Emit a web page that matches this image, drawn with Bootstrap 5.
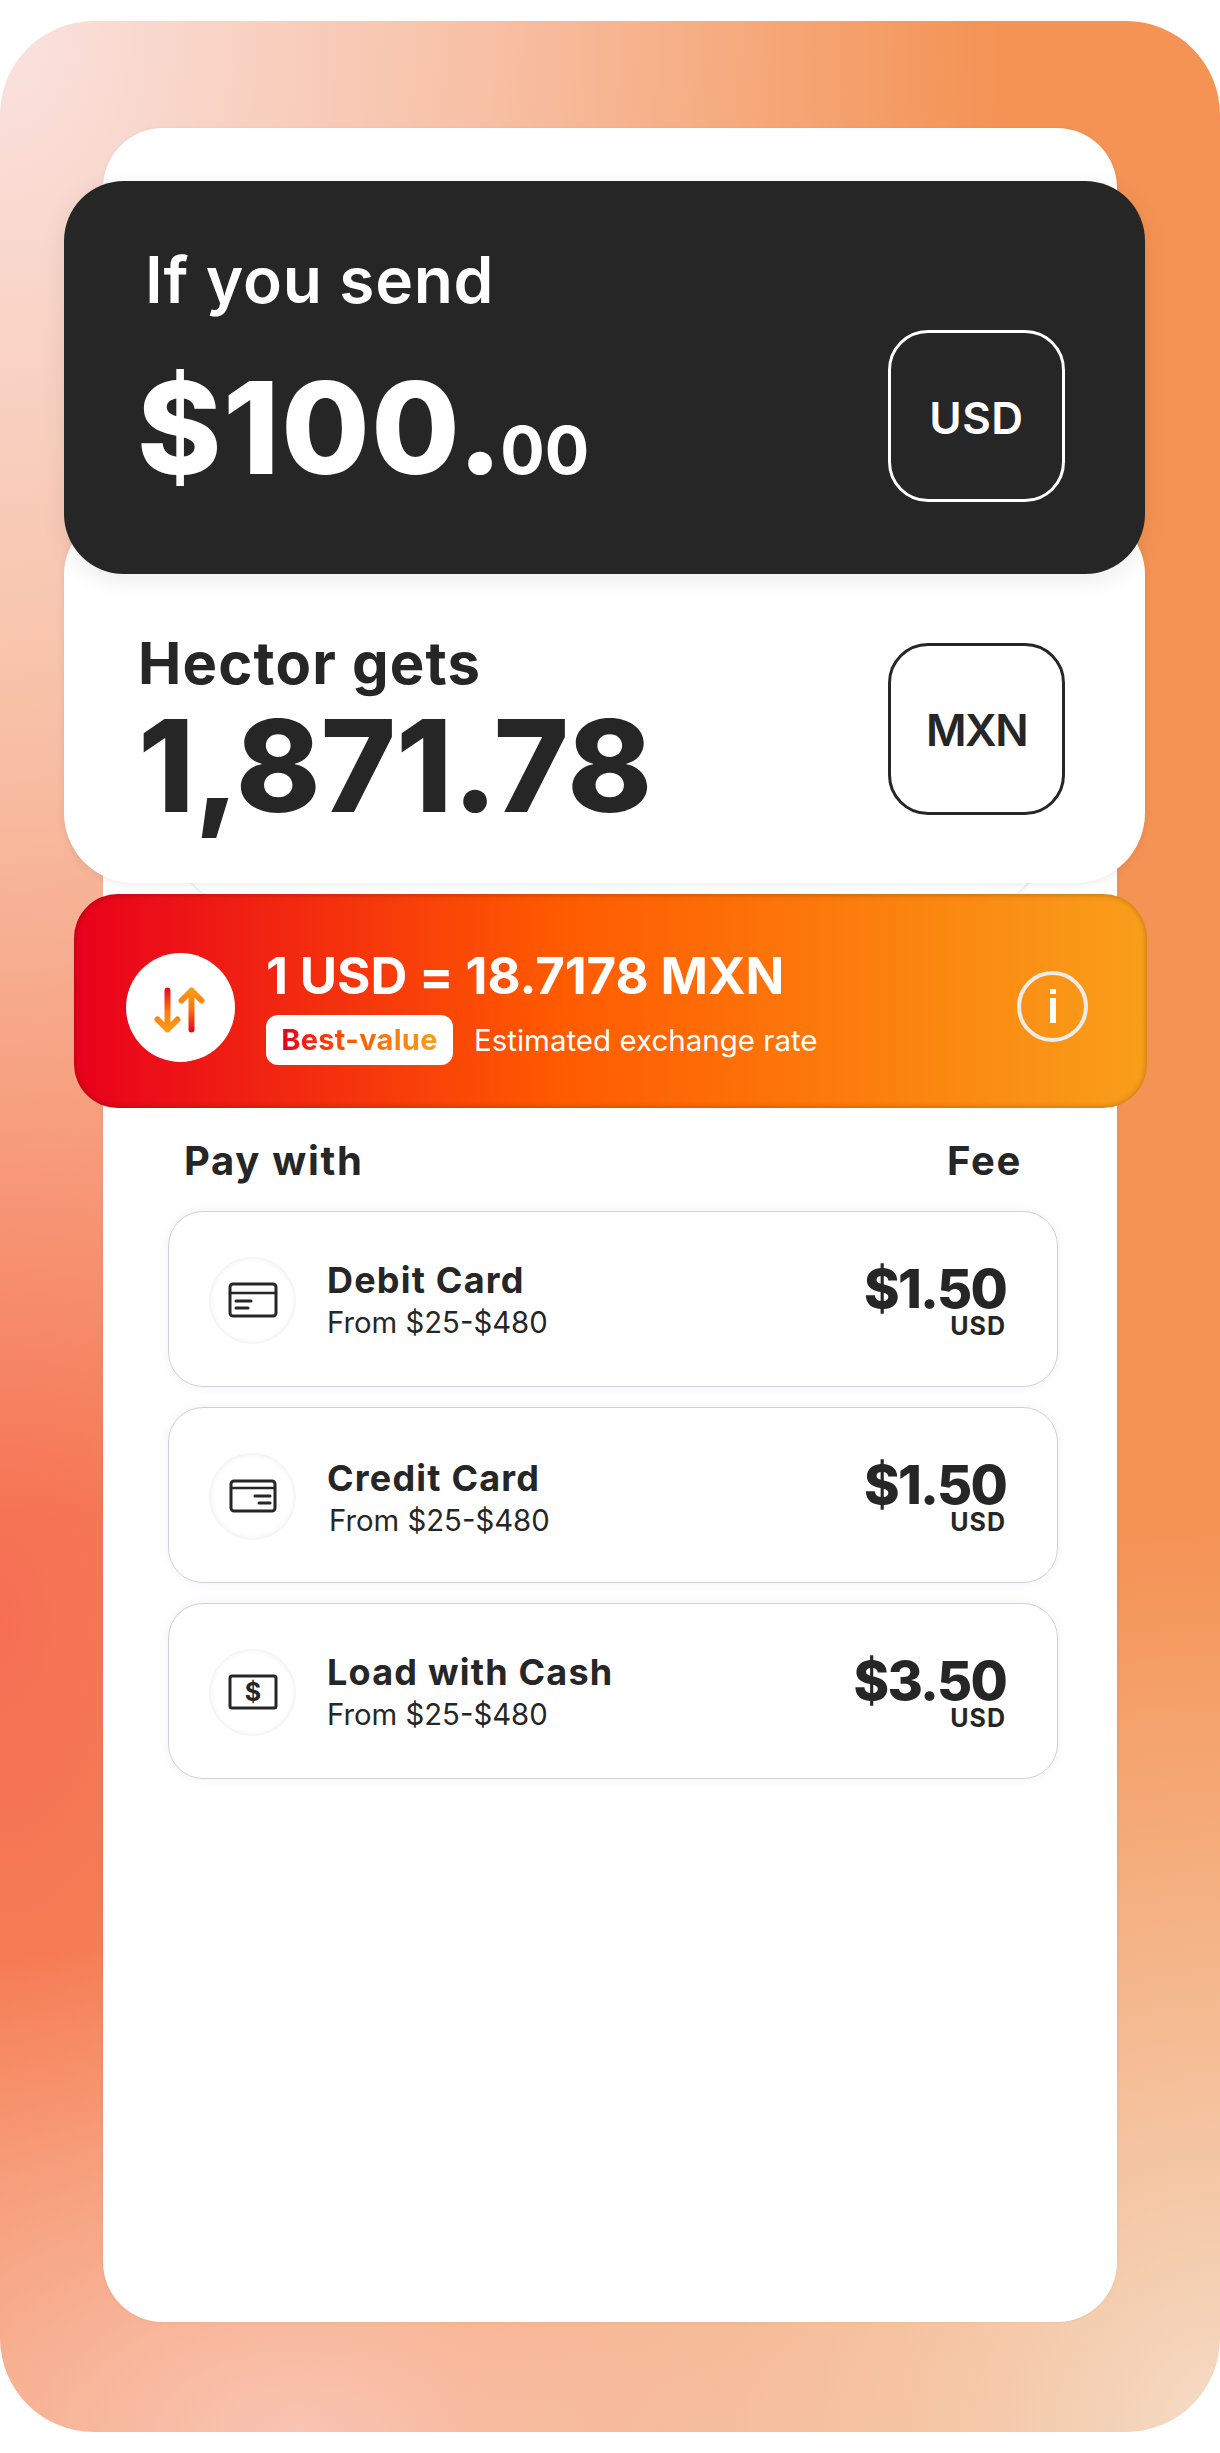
<!doctype html>
<html lang="en"><head><meta charset="utf-8"><title>Send money</title>
<link rel="stylesheet" href="https://cdn.jsdelivr.net/npm/bootstrap@5.3.0/dist/css/bootstrap.min.css">
<style>
html,body{margin:0;background:#fff}
body{font-family:Inter,"Noto Sans",sans-serif;color:#262626;width:1220px;height:2453px;overflow:hidden}
.hero-bg{margin-top:21px;height:2411px;border-radius:94px;padding:107px 103px 0;
background:
 radial-gradient(760px 900px at 1220px 2411px,#f5dcc6 0%,rgba(245,220,198,0) 100%),
 radial-gradient(900px 500px at 300px 2411px,#f9c4b2 0%,rgba(249,196,178,0) 100%),
 radial-gradient(1000px 1500px at 0 0,#fae3e0 0%,rgba(250,220,215,.6) 50%,rgba(250,220,215,0) 100%),
 radial-gradient(520px 1000px at 0 1600px,#f66f55 0%,rgba(246,111,85,0) 100%),
 #f49354}
.panel{height:2194px;background:#fff;border-radius:60px;padding-top:53px;box-shadow:0 0 4px rgba(0,0,0,.05)}
.send-box{margin:0 -28px 0 -39px;height:393px;background:#262626;color:#fff;border-radius:60px;padding:0 80px 0 81px;position:relative;z-index:3;box-shadow:0 6px 24px rgba(0,0,0,.08)}
.get-box{margin:-60px -28px 0 -39px;height:369px;background:#fff;border-radius:60px 60px 70px 70px;padding:0 80px 0 74px;position:relative;z-index:2;box-shadow:0 2px 8px rgba(0,0,0,.08)}
.arc-under{height:70px;margin:-49px 75px 0;border-radius:0 0 60px 60px;box-shadow:0 1px 3px rgba(0,0,0,.12);position:relative;z-index:1}
.send-label{font-size:64px;font-weight:600;line-height:1;margin-top:67px;letter-spacing:.7px}
.big-num{font-size:128px;font-weight:800;line-height:1;letter-spacing:0}
.send-num{margin:52px 0 0 -8px;letter-spacing:1.6px}
.get-num{margin-top:10px}
.big-num small{font-size:66px;font-weight:700;letter-spacing:0;margin-left:-4px}
.cur-box{width:177px;height:172px;flex:none;border-radius:40px;border:3px solid #fff;font-size:44px;font-weight:600;padding-top:3px}
.send-cur{margin-top:149px;letter-spacing:.5px}
.get-cur{margin-top:129px;border-color:#262626;letter-spacing:-1.5px;padding-top:2px}
.get-label{font-size:58px;font-weight:700;line-height:1;margin-top:120px;letter-spacing:1.2px}
.rate-bar{margin:-10px -30px 0 -29px;height:214px;position:relative;z-index:4;border-radius:44px;padding:13px 59px 0 52px;color:#fff;
 background:linear-gradient(90deg,#e8001c 0%,#ff5a00 45%,#f99f1a 100%);box-shadow:inset 0 0 6px rgba(0,0,0,.28)}
.rate-ico{width:109px;height:109px;border-radius:50%;background:#fff;flex:none;margin-right:31px}
.rate-main{font-size:51px;font-weight:700;line-height:1;letter-spacing:-.1px}
.best-row{margin-top:14px}
.best-tag{height:50px;width:187px;border-radius:12px;background:#fff;font-size:29px;font-weight:700;margin-right:21px;letter-spacing:.3px}
.best-txt{background:linear-gradient(90deg,#e8001c,#ff5a00 45%,#f99f1a);-webkit-background-clip:text;background-clip:text;color:transparent}
.rate-note{font-size:29.5px}
.info-ico{width:71px;height:71px;border-radius:50%;border:4px solid #ececec;flex:none;margin-top:-2px}
.head-row{padding:0 95px 0 81px;margin-top:33px;font-size:40px;font-weight:700;line-height:1;height:70px;letter-spacing:1.7px}
.pay-list{padding:0 59px 0 65px}
.pay-row{height:176px;border:1.5px solid #cfcfdc;border-radius:35px;padding:2px 51px 0 40px;margin-bottom:20px;box-shadow:0 0 10px rgba(120,120,220,.1)}
.pay-ico{width:87px;height:87px;border-radius:50%;box-shadow:inset 0 0 6px rgba(0,0,0,.1);flex:none;margin-right:31px}
.pay-title{font-size:36px;font-weight:700;line-height:1;letter-spacing:1.2px}
.pay-sub{font-size:29.3px;line-height:1;margin-top:10px}
.fee-num{font-size:54px;font-weight:800;line-height:1;letter-spacing:-1.8px}
.fee-cur{font-size:25px;font-weight:700;line-height:.8;padding-bottom:2px;letter-spacing:1px}
.text-shift{padding-top:4px}
.sub-shift{margin-left:2px}
svg{display:block}
</style></head><body>
<div class="hero-bg"><div class="panel">
  <div class="send-box d-flex justify-content-between align-items-start">
    <div><div class="send-label">If you send</div><div class="big-num send-num">$100.<small>00</small></div></div>
    <div class="cur-box send-cur d-flex align-items-center justify-content-center">USD</div>
  </div>
  <div class="get-box d-flex justify-content-between align-items-start">
    <div><div class="get-label">Hector gets</div><div class="big-num get-num">1,871.78</div></div>
    <div class="cur-box get-cur d-flex align-items-center justify-content-center">MXN</div>
  </div>
  <div class="arc-under"></div>
  <div class="rate-bar d-flex align-items-center">
    <div class="rate-ico d-flex align-items-center justify-content-center">
      <svg width="56" height="52" viewBox="0 0 56 52" fill="none" stroke-width="6" stroke-linecap="round" stroke-linejoin="round">
        <defs>
          <linearGradient id="gu" gradientUnits="userSpaceOnUse" x1="0" y1="5" x2="0" y2="50"><stop offset="0" stop-color="#f99f1a"/><stop offset=".45" stop-color="#ff7a10"/><stop offset="1" stop-color="#e8001c"/></linearGradient>
          <linearGradient id="gd" gradientUnits="userSpaceOnUse" x1="0" y1="5" x2="0" y2="50"><stop offset="0" stop-color="#e8001c"/><stop offset=".55" stop-color="#ff7a10"/><stop offset="1" stop-color="#f99f1a"/></linearGradient>
        </defs>
        <path d="M14.5 8.5V47.5M4.5 37.5L14.5 47.5L24.5 37.5" stroke="url(#gd)"/>
        <path d="M38.5 47.5V8.5M28.5 18.5L38.5 8.5L48.5 18.5" stroke="url(#gu)"/>
      </svg>
    </div>
    <div class="flex-grow-1">
      <div class="rate-main">1 USD = 18.7178 MXN</div>
      <div class="best-row d-flex align-items-center">
        <span class="best-tag d-flex align-items-center justify-content-center"><span class="best-txt">Best-value</span></span>
        <span class="rate-note">Estimated exchange rate</span>
      </div>
    </div>
    <div class="info-ico d-flex align-items-center justify-content-center">
      <svg width="8" height="36" viewBox="0 0 8 36"><rect x="1" y="0" width="6" height="5" fill="#fff"/><rect x="1" y="9" width="6" height="25" fill="#fff"/></svg>
    </div>
  </div>
  <div class="head-row d-flex justify-content-between"><span>Pay with</span><span>Fee</span></div>
  <div class="pay-list">
    <div class="pay-row d-flex align-items-center">
      <div class="pay-ico d-flex align-items-center justify-content-center">
        <svg width="50" height="36" viewBox="0 0 50 36" fill="none" stroke="#262626" stroke-width="3"><rect x="2" y="2" width="46" height="32" rx="3"/><path d="M2 11H48" stroke-width="2.5"/><path d="M8 19H23M8 26H20" stroke-linecap="round"/></svg>
      </div>
      <div class="flex-grow-1"><div class="pay-title">Debit Card</div><div class="pay-sub">From $25-$480</div></div>
      <div class="text-end"><div class="fee-num">$1.50</div><div class="fee-cur">USD</div></div>
    </div>
    <div class="pay-row d-flex align-items-center">
      <div class="pay-ico d-flex align-items-center justify-content-center">
        <svg width="48" height="34" viewBox="0 0 48 34" fill="none" stroke="#262626" stroke-width="3"><rect x="2" y="2" width="44" height="30" rx="3"/><path d="M2 9H46" stroke-width="2.5"/><path d="M26 17H41M30 24H41" stroke-linecap="round"/></svg>
      </div>
      <div class="flex-grow-1 text-shift"><div class="pay-title">Credit Card</div><div class="pay-sub sub-shift">From $25-$480</div></div>
      <div class="text-end"><div class="fee-num">$1.50</div><div class="fee-cur">USD</div></div>
    </div>
    <div class="pay-row d-flex align-items-center">
      <div class="pay-ico d-flex align-items-center justify-content-center">
        <svg width="50" height="36" viewBox="0 0 50 36" fill="none" stroke="#262626" stroke-width="3"><rect x="2" y="2" width="46" height="32" rx="2"/><text x="25" y="27" text-anchor="middle" font-family="Inter,sans-serif" font-size="25" font-weight="700" fill="#262626" stroke="none">$</text></svg>
      </div>
      <div class="flex-grow-1"><div class="pay-title">Load with Cash</div><div class="pay-sub">From $25-$480</div></div>
      <div class="text-end"><div class="fee-num">$3.50</div><div class="fee-cur">USD</div></div>
    </div>
  </div>
</div></div>
</body></html>
